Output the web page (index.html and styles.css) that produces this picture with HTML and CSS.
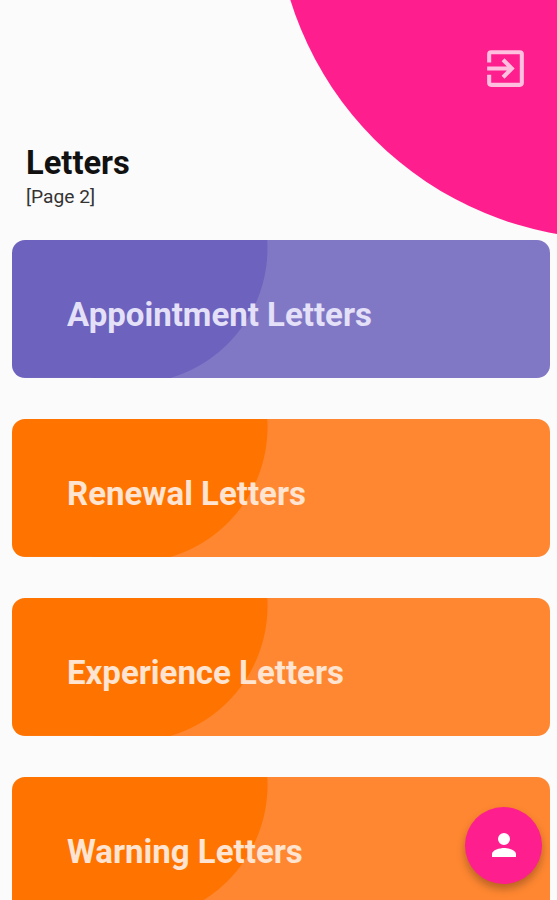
FILE: index.html
```html
<!DOCTYPE html>
<html lang="en">
<head>
<meta charset="utf-8">
<meta name="viewport" content="width=device-width, initial-scale=1">
<title>Letters</title>
<link rel="stylesheet" href="styles.css">
</head>
<body>
<div class="screen">
  <div class="corner"></div>
  <header class="header">
    <button class="exit" aria-label="Log out">
      <svg viewBox="0 0 24 24"><path d="M10.09 15.59 11.5 17l5-5-5-5-1.41 1.41L12.67 11H3v2h9.67zM19 3H5a2 2 0 0 0-2 2v4h2V5h14v14H5v-4H3v4a2 2 0 0 0 2 2h14a2 2 0 0 0 2-2V5a2 2 0 0 0-2-2z"/></svg>
    </button>
    <h1 class="title">Letters</h1>
    <p class="subtitle">[Page 2]</p>
  </header>
  <main class="cards">
    <section class="card card-purple"><h2 class="label">Appointment Letters</h2></section>
    <section class="card"><h2 class="label">Renewal Letters</h2></section>
    <section class="card"><h2 class="label">Experience Letters</h2></section>
    <section class="card"><h2 class="label">Warning Letters</h2></section>
  </main>
  <button class="fab" aria-label="Profile">
    <svg viewBox="0 0 24 24"><path d="M12 12a4 4 0 1 0 0-8 4 4 0 0 0 0 8zm0 2c-2.67 0-8 1.34-8 4v2h16v-2c0-2.66-5.33-4-8-4z"/></svg>
  </button>
</div>
</body>
</html>
```
FILE: styles.css
```css
* {
  box-sizing: border-box;
  margin: 0;
}

body {
  background: #fbfbfb;
  font-family: Roboto, sans-serif;
}

button {
  border: 0;
  padding: 0;
  background: none;
}

svg {
  display: block;
  fill: currentColor;
}

.screen {
  position: relative;
  height: 900px;
  overflow: hidden;
}

.corner {
  position: absolute;
  top: -441px;
  left: 274.5px;
  width: 680px;
  height: 680px;
  border-radius: 50%;
  background: #ff1e8e;
}

.header {
  position: relative;
  display: flex;
  flex-direction: column;
  height: 240px;
  padding: 44px 27px 0 26px;
}

.exit {
  align-self: flex-end;
  color: #ffc0df;
}

.exit svg {
  width: 49px;
  height: 49px;
}

.title {
  margin-top: 50px;
  font-size: 32.7px;
  line-height: 40px;
  font-weight: 700;
  color: #111;
}

.subtitle {
  font-size: 19.2px;
  line-height: 27px;
  color: #333;
}

.cards {
  display: flex;
  flex-direction: column;
  gap: 41.5px;
  padding: 0 7px 0 12px;
}

.card {
  --fill: #ff7300;
  --base: #ff8731;
  flex: none;
  height: 137.5px;
  padding: 55px 55px 0;
  border-radius: 13px;
  background:
    linear-gradient(var(--fill), var(--fill)) left / 120px 100% no-repeat,
    radial-gradient(circle at 120px 8px, var(--fill) 135px, var(--base) 136px);
}

.card-purple {
  --fill: #6d62bd;
  --base: #8178c5;
}

.label {
  font-size: 33px;
  line-height: 40px;
  font-weight: 700;
  color: #ffe4d2;
}

.card-purple .label {
  color: #e3e0f8;
}

.fab {
  position: absolute;
  top: 806.5px;
  left: 465px;
  display: grid;
  place-items: center;
  width: 77px;
  height: 77px;
  border-radius: 50%;
  background: #ff1e8e;
  color: #fff;
  box-shadow: 0 5px 8px rgba(0, 0, 0, 0.28);
}

.fab svg {
  width: 36px;
  height: 36px;
}
```
